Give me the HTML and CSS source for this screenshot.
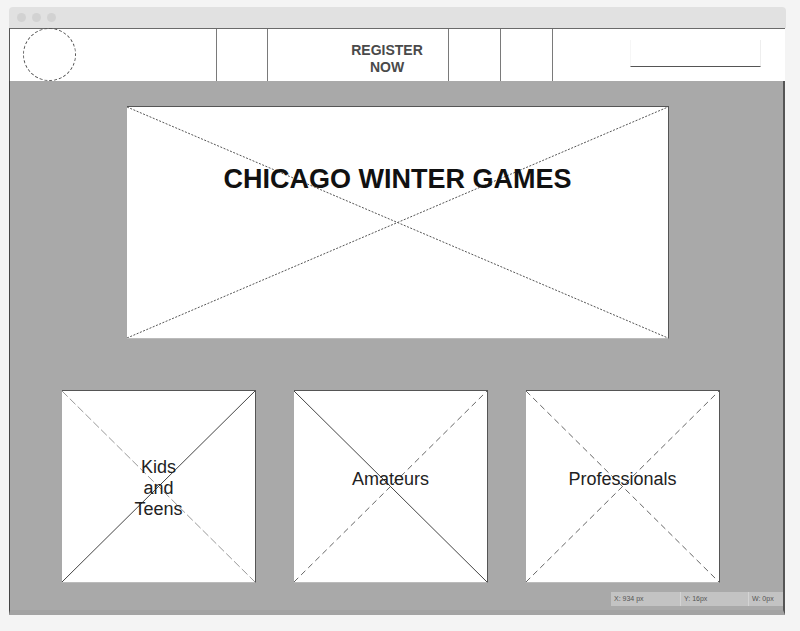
FILE: index.html
```html
<!DOCTYPE html>
<html>
<head>
<meta charset="utf-8">
<link rel="stylesheet" href="styles.css">
</head>
<body>
<div class="window">
  <div class="titlebar">
    <span class="dot"></span><span class="dot"></span><span class="dot"></span>
  </div>
  <nav class="nav">
    <div class="cell logo-cell"><div class="logo"></div></div>
    <div class="cell c-small"></div>
    <div class="cell register"><span>REGISTER<br>NOW</span></div>
    <div class="cell c-small2"></div>
    <div class="cell c-small2"></div>
    <div class="cell search-cell"><div class="search"></div></div>
  </nav>
  <main class="main">
    <section class="hero">
      <svg class="x" viewBox="0 0 100 100" preserveAspectRatio="none">
        <line x1="0" y1="0" x2="100" y2="100" class="dot-line"/>
        <line x1="0" y1="100" x2="100" y2="0" class="dot-line"/>
      </svg>
      <h1 class="hero-title">CHICAGO WINTER GAMES</h1>
    </section>
    <section class="cards">
      <div class="card card-multi">
        <svg class="x" viewBox="0 0 100 100" preserveAspectRatio="none">
          <line x1="0" y1="0" x2="100" y2="100" class="dash-light"/>
          <line x1="0" y1="100" x2="100" y2="0" class="solid"/>
        </svg>
        <span class="card-label">Kids<br>and<br>Teens</span>
      </div>
      <div class="card card-single">
        <svg class="x" viewBox="0 0 100 100" preserveAspectRatio="none">
          <line x1="0" y1="0" x2="100" y2="100" class="solid"/>
          <line x1="0" y1="100" x2="100" y2="0" class="dash"/>
        </svg>
        <span class="card-label">Amateurs</span>
      </div>
      <div class="card card-single">
        <svg class="x" viewBox="0 0 100 100" preserveAspectRatio="none">
          <line x1="0" y1="0" x2="100" y2="100" class="dash"/>
          <line x1="0" y1="100" x2="100" y2="0" class="dash"/>
        </svg>
        <span class="card-label">Professionals</span>
      </div>
    </section>
    <div class="status">
      <span class="seg s1">X: 934 px</span>
      <span class="seg s2">Y: 16px</span>
      <span class="seg s3">W: 0px</span>
    </div>
  </main>
</div>
</body>
</html>
```

FILE: styles.css
```css
* { box-sizing: border-box; }
html, body { margin: 0; padding: 0; }
body {
  background: #f4f4f4;
  font-family: "Liberation Sans", Arial, sans-serif;
  width: 800px;
  height: 631px;
  overflow: hidden;
}
.window {
  margin: 7px 0 0 9px;
  width: 777px;
}
.titlebar {
  height: 21px;
  background: #e1e1e1;
  border-radius: 4px 4px 0 0;
  display: flex;
  align-items: center;
  padding-left: 8px;
  gap: 6px;
}
.dot {
  width: 9px;
  height: 9px;
  border-radius: 50%;
  background: #d2d2d2;
}
.nav {
  display: flex;
  height: 53px;
  background: #fff;
  border-top: 1px solid #6a6a6a;
  border-left: 1px solid #555;
  margin-right: 1px;
}
.cell {
  height: 100%;
  border-right: 1px solid #7a7a7a;
}
.logo-cell {
  width: 207px;
  padding: 0 0 0 13px;
}
.logo {
  width: 53px;
  height: 53px;
  border-radius: 50%;
  border: 1.3px dashed #555;
  margin-top: -1px;
}
.c-small { width: 51px; }
.c-small2 { width: 52px; }
.register {
  width: 181px;
  display: flex;
  align-items: center;
  justify-content: center;
  padding: 7px 0 0 58px;
  font-weight: bold;
  font-size: 14px;
  line-height: 17px;
  color: #4a4a4a;
  text-align: center;
}
.search-cell {
  flex: 1;
  border-right: none;
  padding: 11px 0 0 77px;
}
.search {
  width: 131px;
  height: 27px;
  border-bottom: 1.5px solid #555;
  border-right: 1px solid #eee;
  border-left: 1px solid #f6f6f6;
}
.main {
  position: relative;
  height: 534px;
  background: #a9a9a9;
  border-left: 1px solid #444;
  border-right: 2px solid #555;
  border-bottom: 5px solid #a3a3a3;
  margin-right: 1px;
  padding-top: 25px;
}
.hero {
  position: relative;
  width: 542px;
  height: 233px;
  margin-left: 117px;
  background: #fff;
  border-top: 1.5px solid #555;
  border-right: 1.5px solid #555;
  border-bottom: 1px solid #bbb;
  text-align: center;
}
.x {
  position: absolute;
  left: 0; top: 0;
  width: 100%;
  height: 100%;
}
.x line { vector-effect: non-scaling-stroke; }
.dot-line { stroke: #555; stroke-width: 1; stroke-dasharray: 2 1.5; }
.solid { stroke: #444; stroke-width: 1; }
.dash { stroke: #666; stroke-width: 1; stroke-dasharray: 6 4; }
.dash-light { stroke: #999; stroke-width: 1; stroke-dasharray: 8 3; }
.hero-title {
  position: relative;
  margin: 0;
  padding-top: 59px;
  font-size: 27px;
  line-height: 27px;
  font-weight: bold;
  color: #111;
}
.cards {
  display: flex;
  gap: 38px;
  margin: 51px 0 0 52px;
}
.card {
  position: relative;
  width: 194px;
  height: 193px;
  background: #fff;
  border-top: 1.5px solid #555;
  border-right: 1.5px solid #555;
  border-bottom: 1.5px solid #bbb;
  display: flex;
  align-items: center;
  justify-content: center;
}
.card-multi { padding-top: 4px; }
.card-single { padding-bottom: 15px; }
.card-label {
  position: relative;
  font-size: 18px;
  line-height: 21px;
  color: #222;
  text-align: center;
}
.status {
  position: absolute;
  left: 601px;
  top: 511px;
  display: flex;
  height: 14px;
  width: 172px;
}
.seg {
  height: 100%;
  background: #c3c3c3;
  font-size: 7px;
  line-height: 14px;
  color: #555;
  padding-left: 3px;
  border-right: 1px solid #d4d4d4;
}
.s1 { width: 70px; }
.s2 { width: 68px; }
.s3 { flex: 1; border-right: none; }
```
